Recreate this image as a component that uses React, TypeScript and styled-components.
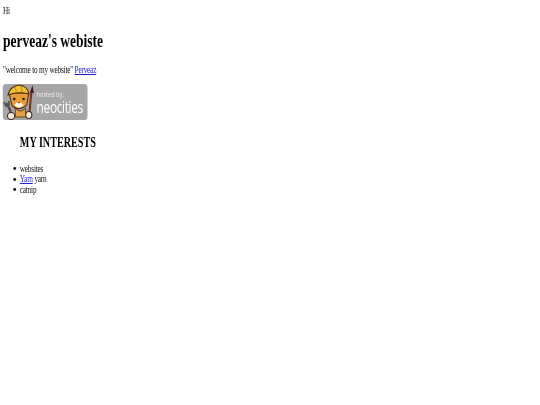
import styled, { createGlobalStyle } from 'styled-components';

const GlobalStyle = createGlobalStyle`
  html, body {
    margin: 0;
    background: #fff;
    overflow: hidden;
  }
  a {
    color: #2020d0;
  }
`;

// the page in the picture is squeezed sideways, so the whole sheet is scaled
const Page = styled.div`
  width: 771px;
  padding: 5px 4.3px;
  box-sizing: border-box;
  transform: scaleX(0.7);
  transform-origin: top left;
  filter: blur(0.3px);
  font-family: "Liberation Serif", "Times New Roman", serif;
  font-size: 10.4px;
  letter-spacing: -0.3px;
  line-height: 11px;
  color: #111;
`;

const Greeting = styled.div`
  height: 11px;
`;

const Title = styled.h1`
  margin: 13px 0 0;
  font-size: 19.3px;
  letter-spacing: 0;
  line-height: 23px;
  font-weight: 700;
  color: #000;
`;

const Welcome = styled.p`
  margin: 12px 0 0;
`;

const Badge = styled.a`
  display: flex;
  align-items: center;
  width: 121px;
  height: 36px;
  margin-top: 9px;
  border-radius: 4px;
  background: #a6a6a6;
  text-decoration: none;
`;

const Mascot = styled.svg`
  flex: none;
  width: 46px;
  height: 36px;
`;

const BadgeText = styled.div`
  display: flex;
  flex-direction: column;
  margin-left: 2px;
  color: #fff;
  font-family: "Open Sans", sans-serif;
  letter-spacing: 0;
`;

const HostedBy = styled.span`
  font-size: 8px;
  line-height: 9px;
  color: #eee;
`;

const Brand = styled.span`
  font-size: 17px;
  line-height: 17px;
  letter-spacing: -0.5px;
`;

const Section = styled.section`
  margin-top: 14px;
  padding-left: 24px;
`;

const Heading = styled.h2`
  margin: 0;
  font-size: 14.5px;
  letter-spacing: 0;
  line-height: 16px;
  font-weight: 700;
  color: #000;
`;

const List = styled.ul`
  margin: 13.5px 0 0;
  padding: 0;
  list-style: none;
`;

const Item = styled.li`
  display: flex;
  align-items: center;
  gap: 5.1px;
  margin-left: -9.3px;
  line-height: 10.6px;
  &::before {
    content: "";
    flex: none;
    width: 4.2px;
    height: 3px;
    border-radius: 50%;
    background: #111;
  }
`;

// keeps the link and the word after it on one flex line
const ItemText = styled.span``;

const CatBadge = () => (
  <Mascot viewBox="0 0 31 36" preserveAspectRatio="none" aria-hidden="true">
    <path d="M3.5 19 L7 26 L8 32" stroke="#55504c" strokeWidth="2.4" fill="none" />
    <path d="M1 18 L3 22 L6 21 L6 17" stroke="#55504c" strokeWidth="1.6" fill="none" />
    <ellipse cx="8" cy="32" rx="3.5" ry="3.5" fill="#f4ead8" stroke="#3a2a22" strokeWidth="1" />
    <path d="M27.5 8 L25.5 30" stroke="#7a2f22" strokeWidth="2" />
    <path d="M28.5 1 L30 9 L26 9 Z" fill="#4a2018" />
    <ellipse cx="25" cy="31" rx="3" ry="3.5" fill="#f4ead8" stroke="#3a2a22" strokeWidth="1" />
    <path d="M12 24 Q17 30 22 24 L22 33 L12 33 Z" fill="#e8a045" stroke="#4a2a14" strokeWidth="0.8" />
    <path d="M6 9 L9 22 Q16 28 23 21 L25 9 Z" fill="#eb9a35" stroke="#4a2a14" strokeWidth="1" />
    <path d="M11 21 Q15.5 15 20 21 Q15.5 26 11 21 Z" fill="#fff6e6" />
    <circle cx="11" cy="15" r="1.3" fill="#222" />
    <circle cx="20" cy="15" r="1.3" fill="#222" />
    <path d="M14.5 18 h2 l-1 1.5 Z" fill="#222" />
    <path d="M5 11 Q7 2 16 1 Q24 2 25 10 Q15 7 5 11 Z" fill="#f2c230" stroke="#4a2a14" strokeWidth="1" />
    <path d="M12 2.5 L13 8 M18 2 L18.5 8" stroke="#b9851c" strokeWidth="1" />
  </Mascot>
);

const App = () => (
  <Page>
    <GlobalStyle />
    <Greeting>Hi</Greeting>
    <Title>perveaz's webiste</Title>
    <Welcome>
      "welcome to my website" <a href="#perveaz">Perveaz</a>
    </Welcome>
    <Badge href="#neocities">
      <CatBadge />
      <BadgeText>
        <HostedBy>hosted by,</HostedBy>
        <Brand>neocities</Brand>
      </BadgeText>
    </Badge>
    <Section>
      <Heading>MY INTERESTS</Heading>
      <List>
        <Item>
          <ItemText>websites</ItemText>
        </Item>
        <Item>
          <ItemText>
            <a href="#yarn">Yarn</a> yarn
          </ItemText>
        </Item>
        <Item>
          <ItemText>catnip</ItemText>
        </Item>
      </List>
    </Section>
  </Page>
);

export default App;
